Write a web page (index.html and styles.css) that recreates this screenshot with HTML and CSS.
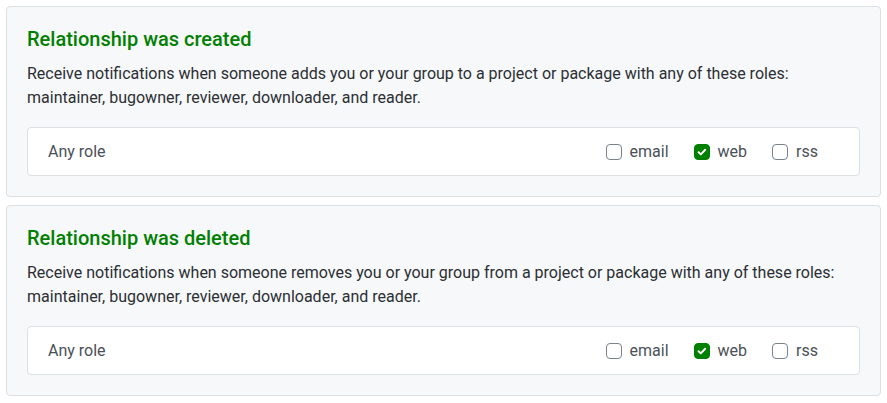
FILE: index.html
```html
<!DOCTYPE html>
<html>
<head>
<meta charset="utf-8">
<link rel="stylesheet" href="styles.css">
</head>
<body>
<div class="card">
  <h5 class="title">Relationship was created</h5>
  <p class="desc">Receive notifications when someone adds you or your group to a project or package with any of these roles: maintainer, bugowner, reviewer, downloader, and reader.</p>
  <div class="row">
    <span class="role">Any role</span>
    <div class="checks">
      <label class="check"><span class="box"></span>email</label>
      <label class="check"><span class="box on"><svg viewBox="0 0 16 16" width="16" height="16"><path d="M4.6 8.2l2.2 2.2 4.4-4.6" fill="none" stroke="#fff" stroke-width="2" stroke-linecap="round" stroke-linejoin="round"/></svg></span>web</label>
      <label class="check"><span class="box"></span>rss</label>
    </div>
  </div>
</div>
<div class="card">
  <h5 class="title">Relationship was deleted</h5>
  <p class="desc">Receive notifications when someone removes you or your group from a project or package with any of these roles: maintainer, bugowner, reviewer, downloader, and reader.</p>
  <div class="row">
    <span class="role">Any role</span>
    <div class="checks">
      <label class="check"><span class="box"></span>email</label>
      <label class="check"><span class="box on"><svg viewBox="0 0 16 16" width="16" height="16"><path d="M4.6 8.2l2.2 2.2 4.4-4.6" fill="none" stroke="#fff" stroke-width="2" stroke-linecap="round" stroke-linejoin="round"/></svg></span>web</label>
      <label class="check"><span class="box"></span>rss</label>
    </div>
  </div>
</div>
</body>
</html>
```
FILE: styles.css
```css
body {
  margin: 6px;
  background: #fff;
  font-family: Roboto, "Liberation Sans", sans-serif;
  font-size: 16px;
  color: #212529;
}
.card {
  background: #f7f8fa;
  border: 1px solid #dcdfe3;
  border-radius: 4px;
  padding: 20px;
  margin-bottom: 8px;
}
.title {
  margin: 0 0 11px;
  font-size: 20px;
  line-height: 24px;
  font-weight: 500;
  color: #008000;
}
.desc {
  margin: 0 0 17px;
  line-height: 24px;
  color: #2b2f33;
}
.row {
  display: flex;
  align-items: center;
  justify-content: space-between;
  background: #fff;
  border: 1px solid #dcdfe3;
  border-radius: 4px;
  padding: 12px 41px 12px 20px;
  line-height: 23px;
  color: #4a5057;
}
.checks {
  display: flex;
  gap: 25px;
}
.check {
  display: flex;
  align-items: center;
  gap: 8px;
}
.box {
  box-sizing: border-box;
  width: 16px;
  height: 16px;
  border: 1px solid #7b828a;
  border-radius: 4px;
  background: #fff;
  display: flex;
}
.box.on {
  background: #008000;
  border-color: #008000;
}
.box svg {
  margin: -1px;
}
```
